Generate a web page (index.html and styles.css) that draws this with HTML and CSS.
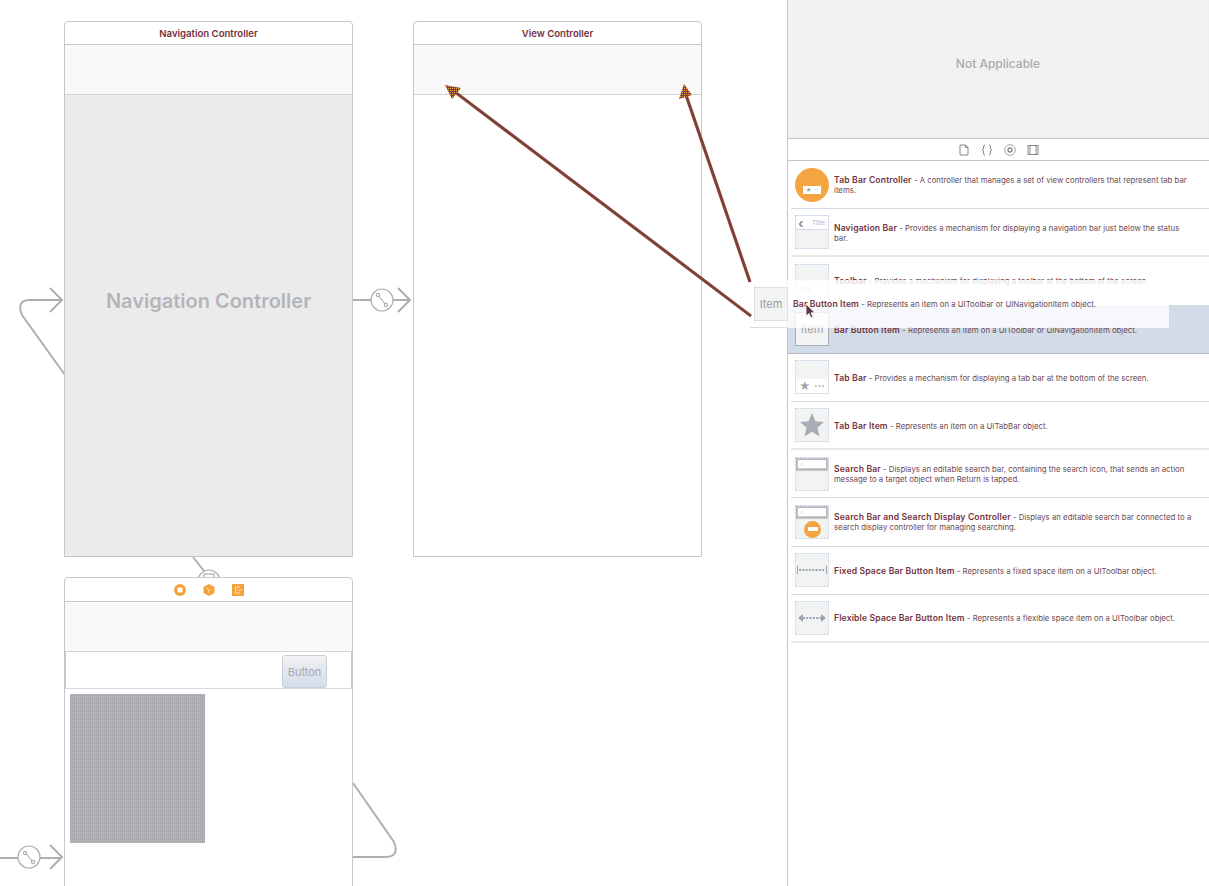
FILE: index.html
```html
<!DOCTYPE html>
<html lang="en">
<head>
    <meta charset="UTF-8">
    <title>Storyboard - Bar Button Item</title>
    <link rel="stylesheet" href="styles.css">
</head>
<body>
    <main class="canvas">
        <!-- connections that run behind the scenes -->
        <svg class="wires" width="787" height="886" viewBox="0 0 787 886">
            <g fill="none" stroke="#adafb5" stroke-width="2">
                <path d="M65 375 L22 315 Q16 300 30 300 L62 300"/>
                <path d="M50 288 L62 300 L50 312"/>
                <path d="M353 300 H371 M393 300 H410"/>
                <path d="M398 288 L410 300 L398 312"/>
                <path d="M193 557 L204 571"/>
                <path d="M0 858 H18 M40 858 H61"/>
                <path d="M50 845 L62 857 L50 869"/>
                <path d="M353 783 L394 842 Q400 857 385 857 L353 857"/>
            </g>
            <g fill="#fff" stroke="#adafb5" stroke-width="1.2">
                <circle cx="382" cy="300" r="11"/>
                <circle cx="29" cy="857" r="11"/>
                <circle cx="209" cy="581" r="11"/>
                <rect x="204" y="574" width="10" height="8"/>
                <path d="M378 295 L386 305 M25 852 L33 862"/>
                <circle cx="378" cy="295" r="1.6"/>
                <circle cx="386" cy="305" r="1.6"/>
                <circle cx="25" cy="853" r="1.6"/>
                <circle cx="33" cy="862" r="1.6"/>
            </g>
        </svg>

        <section class="scene scene-nav">
            <h2 class="scene-title">Navigation Controller</h2>
            <div class="nav-bar"></div>
            <div class="scene-body scene-body-grey">Navigation Controller</div>
        </section>

        <section class="scene scene-view">
            <h2 class="scene-title">View Controller</h2>
            <div class="nav-bar"></div>
            <div class="scene-body"></div>
        </section>

        <section class="scene scene-detail">
            <div class="scene-title scene-icons">
                <svg width="14" height="14" viewBox="0 0 14 14"><circle cx="7" cy="7" r="6" fill="#f4a23c"/><rect x="4.500" y="4.500" width="5" height="5" rx="1" fill="#fff"/></svg>
                <svg width="14" height="14" viewBox="0 0 14 14"><path d="M7 1 L12.500 4 V10 L7 13 L1.500 10 V4 Z" fill="#f4a23c"/><path d="M4 5 L7 7 M7 7 V10 M9 6 V7" stroke="#fde3bd" fill="none"/></svg>
                <svg width="14" height="14" viewBox="0 0 14 14"><rect x="1" y="1" width="12" height="12" fill="#f4a23c"/><path d="M9 4 H4.500 V10 H9 M7 7 H11" stroke="#fde3bd" fill="none"/></svg>
            </div>
            <div class="nav-bar"></div>
            <div class="tool-row"><span class="fake-button">Button</span></div>
            <div class="scene-content"><div class="image-view"></div></div>
        </section>

        <!-- the two drag lines lie over the scenes -->
        <svg class="wires drag-lines" width="787" height="886" viewBox="0 0 787 886">
            <defs>
                <pattern id="head-dots" width="2" height="2" patternUnits="userSpaceOnUse">
                    <rect width="2" height="2" fill="#7c3f45"/>
                    <rect width="1" height="1" fill="#f0a23a"/>
                </pattern>
            </defs>
            <path d="M751 316 L455 92 M750 282 L686 95" stroke="#f0a23a" stroke-width="3.400" fill="none"/>
            <path d="M751 316 L455 92 M750 282 L686 95" stroke="#76404a" stroke-width="2.800" fill="none"/>
            <path d="M445 85 L461 88 L452 99 Z" fill="url(#head-dots)"/>
            <path d="M684 84 L692 95 L679 99 Z" fill="url(#head-dots)"/>
        </svg>
    </main>

    <aside class="panel">
        <div class="preview">Not Applicable</div>
        <div class="lib-tabs">
            <svg width="12" height="12" viewBox="0 0 12 12"><path d="M2 1 H7.500 L10 3.500 V11 H2 Z M7.500 1 V3.500 H10" fill="none" stroke="#85878d"/></svg>
            <svg width="12" height="12" viewBox="0 0 12 12"><path d="M4 1 Q2.500 1 2.500 3 V5 L1 6 L2.500 7 V9 Q2.500 11 4 11 M8 1 Q9.500 1 9.500 3 V5 L11 6 L9.500 7 V9 Q9.500 11 8 11" fill="none" stroke="#85878d"/></svg>
            <svg width="12" height="12" viewBox="0 0 12 12"><circle cx="6" cy="6" r="5.300" fill="none" stroke="#a0a3a9"/><circle cx="6" cy="6" r="2" fill="none" stroke="#85878d" stroke-width="1.400"/></svg>
            <svg width="12" height="12" viewBox="0 0 12 12"><rect x="1" y="1.500" width="10" height="9" fill="none" stroke="#85878d"/><path d="M3 1.500 V10.500 M9 1.500 V10.500" stroke="#85878d"/></svg>
        </div>
        <ul class="lib-list">
            <li class="lib-row">
                <div class="thumb thumb-round"><span class="round-bar"><i class="mini-star">★</i> ···</span></div>
                <p><b>Tab Bar Controller</b> - A controller that manages a set of view controllers that represent tab bar items.</p>
            </li>
            <li class="lib-row lib-row-soft">
                <div class="thumb thumb-navbar"><div class="navbar-top"><span class="chevron">‹</span><span>Title</span></div></div>
                <p><b>Navigation Bar</b> - Provides a mechanism for displaying a navigation bar just below the status bar.</p>
            </li>
            <li class="lib-row">
                <div class="thumb thumb-toolbar"><div class="toolbar-bottom">Edit</div></div>
                <p><b>Toolbar</b> - Provides a mechanism for displaying a toolbar at the bottom of the screen.</p>
            </li>
            <li class="lib-row lib-row-selected">
                <div class="thumb thumb-item">Item</div>
                <p><b>Bar Button Item</b> - Represents an item on a UIToolbar or UINavigationItem object.</p>
            </li>
            <li class="lib-row">
                <div class="thumb thumb-tabbar"><div class="tabbar-bottom"><i class="mini-star">★</i><span>···</span></div></div>
                <p><b>Tab Bar</b> - Provides a mechanism for displaying a tab bar at the bottom of the screen.</p>
            </li>
            <li class="lib-row lib-row-soft">
                <div class="thumb">
                    <svg width="26" height="26" viewBox="0 0 26 26"><path d="M13 1 L16.400 9.300 L25 10 L18.400 15.700 L20.500 24.500 L13 19.800 L5.500 24.500 L7.600 15.700 L1 10 L9.600 9.300 Z" fill="#a9acb5"/></svg>
                </div>
                <p><b>Tab Bar Item</b> - Represents an item on a UITabBar object.</p>
            </li>
            <li class="lib-row">
                <div class="thumb thumb-search"><div class="search-top"><div class="search-field">⌕</div></div></div>
                <p><b>Search Bar</b> - Displays an editable search bar, containing the search icon, that sends an action message to a target object when Return is tapped.</p>
            </li>
            <li class="lib-row">
                <div class="thumb thumb-search">
                    <div class="search-top"><div class="search-field">⌕</div></div>
                    <span class="search-badge"><i></i></span>
                </div>
                <p><b>Search Bar and Search Display Controller</b> - Displays an editable search bar connected to a search display controller for managing searching.</p>
            </li>
            <li class="lib-row">
                <div class="thumb">
                    <svg width="32" height="12" viewBox="0 0 32 12"><path d="M1.500 2 V10 M30.500 2 V10" stroke="#9ea3ad"/><path d="M3 6 H29" stroke="#9ea3ad" stroke-width="2" stroke-dasharray="2 1.300"/></svg>
                </div>
                <p><b>Fixed Space Bar Button Item</b> - Represents a fixed space item on a UIToolbar object.</p>
            </li>
            <li class="lib-row lib-row-soft">
                <div class="thumb">
                    <svg width="32" height="12" viewBox="0 0 32 12"><path d="M2 6 L7 2 V10 Z M30 6 L25 2 V10 Z" fill="#9ea3ad"/><path d="M7 6 H25" stroke="#9ea3ad" stroke-width="2" stroke-dasharray="2 1.300"/></svg>
                </div>
                <p><b>Flexible Space Bar Button Item</b> - Represents a flexible space item on a UIToolbar object.</p>
            </li>
        </ul>
    </aside>

    <!-- row being dragged out of the library -->
    <div class="drag-ghost">
        <div class="thumb thumb-item ghost-thumb">Item</div>
        <p><b>Bar Button Item</b> - Represents an item on a UIToolbar or UINavigationItem object.</p>
    </div>
    <svg class="cursor" width="12" height="16" viewBox="0 0 12 16"><path d="M1 1 V13 L4 10.500 L6 15 L8 14 L6 9.800 L10 9.800 Z" fill="#5b3a42" stroke="#fff" stroke-width="0.800"/></svg>
</body>
</html>
```

FILE: styles.css
```css
* {
    box-sizing: border-box;
}
html, body {
    height: 886px;
    margin: 0;
    overflow: hidden;
}
body {
    display: flex;
    position: relative;
    background: #fff;
    font-family: Inter, "Liberation Sans", sans-serif;
    color: #6d4a53;
}

/* storyboard canvas */
.canvas {
    position: relative;
    width: 787px;
    height: 886px;
    overflow: hidden;
}
.wires {
    position: absolute;
    left: 0;
    top: 0;
}
.drag-lines {
    overflow: visible;
    z-index: 5;
}
.scene {
    position: absolute;
    display: flex;
    flex-direction: column;
    background: #fff;
    border: 1px solid #c6c7cb;
    border-radius: 4px 4px 0 0;
}
.scene-nav {
    left: 64px;
    top: 21px;
    width: 289px;
    height: 536px;
}
.scene-view {
    left: 413px;
    top: 21px;
    width: 289px;
    height: 536px;
}
.scene-detail {
    left: 64px;
    top: 577px;
    width: 289px;
    height: 320px;
}
.scene-title {
    flex: none;
    height: 23px;
    margin: 0;
    border-bottom: 1px solid #c6c7cb;
    font-size: 9.600px;
    font-weight: 600;
    line-height: 23px;
    text-align: center;
    color: #73323e;
}
.scene-icons {
    display: flex;
    align-items: center;
    justify-content: center;
    gap: 15px;
    height: 24px;
}
.nav-bar {
    flex: none;
    height: 50px;
    border-bottom: 1px solid #cfd2d8;
    background: conic-gradient(#fdfdfd 25%, #f7f7f7 0) 0 0 / 2px 2px;
}
.scene-body {
    flex: 1;
}
.scene-body-grey {
    display: flex;
    align-items: center;
    justify-content: center;
    padding-bottom: 50px;
    background: #ebebeb;
    font-size: 20px;
    font-weight: 600;
    color: #b3b5bb;
}
.tool-row {
    flex: none;
    display: flex;
    justify-content: flex-end;
    align-items: flex-end;
    height: 37px;
    padding-right: 24px;
    border: 1px solid #c6c7cb;
    border-top: 0;
    border-bottom-color: #d2dae6;
}
.fake-button {
    display: flex;
    align-items: center;
    justify-content: center;
    width: 45px;
    height: 33px;
    border: 1px solid #c9ced6;
    border-radius: 3px;
    background: linear-gradient(#f1f1f2, #d3dde9);
    font-size: 11px;
    color: #a6a9b2;
}
.scene-content {
    flex: 1;
    padding: 5px;
}
.image-view {
    width: 135px;
    height: 149px;
    background: conic-gradient(#bcbec1 25%, #a8aaad 0) 0 0 / 2px 2px;
}

/* object library */
.panel {
    flex: none;
    width: 422px;
    height: 886px;
    border-left: 1px solid #c6c7cb;
}
.preview {
    display: flex;
    align-items: center;
    justify-content: center;
    height: 139px;
    padding-right: 1px;
    padding-bottom: 12px;
    border-bottom: 1px solid #c6c7cb;
    background: conic-gradient(#f7f7f7 25%, #f0f0f0 0) 0 0 / 2px 2px;
    font-size: 12px;
    font-weight: 500;
    color: #a9abb1;
}
.lib-tabs {
    display: flex;
    align-items: center;
    justify-content: center;
    gap: 11px;
    height: 22px;
    border-bottom: 1px solid #c6c7cb;
}
.lib-list {
    margin: 0;
    padding: 0;
    list-style: none;
}
.lib-row {
    position: relative;
    display: flex;
    align-items: center;
    gap: 5px;
    height: 48.200px;
    margin-left: 3px;
    padding-left: 4px;
    padding-right: 14px;
    border-bottom: 1px solid #d3dbe7;
}
.lib-row-soft {
    border-bottom: 2px solid #e9e9ea;
}
.lib-row-selected {
    margin-left: 0;
    padding-left: 7px;
    background: #d2dce8;
    border-bottom: 1px solid #b4b9c2;
}
.lib-row p,
.drag-ghost p {
    margin: 0;
    font-size: 7.800px;
    line-height: 10px;
}
.lib-row p {
    padding-top: 1px;
}
.lib-row b,
.drag-ghost b {
    font-weight: 600;
    font-size: 8.600px;
    letter-spacing: 0.150px;
    color: #73323e;
}

/* library thumbnails */
.thumb {
    flex: none;
    position: relative;
    display: flex;
    align-items: center;
    justify-content: center;
    width: 34px;
    height: 34px;
    border: 1px dotted #c6cedb;
    background: #f2f3f3;
    overflow: hidden;
}
.thumb-round {
    align-items: flex-end;
    padding-bottom: 8px;
    border: 0;
    border-radius: 50%;
    background: #f4a440;
}
.round-bar {
    display: block;
    width: 18px;
    height: 8px;
    background: #fff;
    font-size: 6px;
    line-height: 8px;
    text-align: center;
    color: #8d9096;
}
.mini-star {
    font-style: normal;
    color: #a2a5ae;
}
.thumb-navbar,
.thumb-toolbar,
.thumb-tabbar {
    align-items: stretch;
    flex-direction: column;
    justify-content: flex-start;
}
.navbar-top {
    display: flex;
    justify-content: space-between;
    align-items: center;
    height: 14px;
    padding: 0 3px 0 2px;
    border-bottom: 1px solid #d3d9e3;
    background: #fff;
    font-size: 6.500px;
    color: #a9b4c8;
}
.chevron {
    font-size: 13px;
    font-weight: 700;
    line-height: 12px;
    color: #8c9097;
}
.toolbar-bottom {
    height: 14px;
    margin-top: 18px;
    padding-left: 3px;
    background: #fff;
    font-size: 6.500px;
    line-height: 14px;
    color: #b8bcc4;
}
.thumb-item {
    border: 1px solid #a9adb6;
    font-size: 11px;
    color: #9a9da6;
}
.tabbar-bottom {
    display: flex;
    justify-content: space-between;
    align-items: center;
    height: 14px;
    margin-top: 18px;
    padding: 0 3px;
    background: #fff;
    font-size: 11px;
    line-height: 14px;
    font-weight: 700;
    color: #a2a5ae;
}
.thumb-search {
    align-items: flex-start;
}
.search-top {
    width: 100%;
    height: 13px;
    padding: 2px 2px 0;
    background: conic-gradient(#d0d2d5 25%, #b7b9bd 0) 0 0 / 2px 2px;
}
.search-field {
    height: 8px;
    padding-left: 2px;
    border-radius: 1px;
    background: #fff;
    font-size: 6px;
    line-height: 7px;
    color: #a9b4c8;
}
.search-badge {
    position: absolute;
    left: 8px;
    top: 15px;
    display: flex;
    align-items: center;
    justify-content: center;
    width: 17px;
    height: 17px;
    border-radius: 50%;
    background: #f4a440;
}
.search-badge i {
    width: 10px;
    height: 4px;
    background: #fff;
}

/* row being dragged */
.drag-ghost {
    position: absolute;
    left: 750px;
    top: 280px;
    display: flex;
    align-items: center;
    gap: 5px;
    width: 419px;
    height: 48px;
    padding-left: 4px;
    background: rgba(255, 255, 255, 0.8);
}
.drag-ghost::after {
    content: "";
    position: absolute;
    left: 0;
    bottom: 0;
    width: 38px;
    height: 1px;
    background: #dcdcde;
}
.ghost-thumb {
    border: 1px dotted #c6cedb;
}
.cursor {
    position: absolute;
    left: 805px;
    top: 303px;
}
```
